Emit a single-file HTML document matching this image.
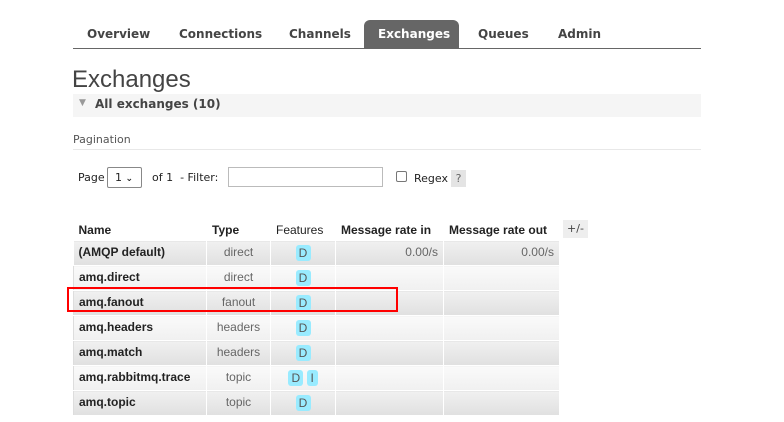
<!DOCTYPE html>
<html><head><style>
*{margin:0;padding:0;box-sizing:border-box}
body{width:784px;height:422px;background:#fff;font-family:"DejaVu Sans","Liberation Sans",sans-serif;color:#222;position:relative;overflow:hidden;font-size:11.5px}
.a{position:absolute;white-space:nowrap}
.tab{position:absolute;top:27px;font-weight:bold;font-size:12px;color:#444}
table{position:absolute;left:73px;top:219px;border-collapse:collapse;font-size:12px;table-layout:fixed;width:486px;font-family:"Liberation Sans",sans-serif}
td,th{height:25px;border:1px solid #fff;border-left:1px solid #ddd;padding:0 5px;vertical-align:top;padding-top:4px;white-space:nowrap;overflow:hidden}
th{background:#fff;text-align:left;height:21px;padding-top:3px}
tr:nth-child(even) td{background:linear-gradient(#f0f0f0,#e0e0e0)}
tr:nth-child(odd) td{background:linear-gradient(#fafafa,#f0f0f0)}
td.n{font-weight:bold}
td.t{text-align:center;color:#666}
td.f{text-align:center;padding-top:3px}
td.r{text-align:right;color:#666}
.b{display:inline-block;background:#99ebff;color:#555;border-radius:3px;width:15px;height:16px;line-height:16px;text-align:center;font-size:12px;margin-top:1px}
</style></head><body>
<div class="a" style="left:364px;top:20px;width:95px;height:29px;background:#666;border-radius:6px 6px 0 0"></div>
<div class="tab" style="left:87px">Overview</div>
<div class="tab" style="left:179px">Connections</div>
<div class="tab" style="left:289px">Channels</div>
<div class="tab" style="left:378px;color:#fff">Exchanges</div>
<div class="tab" style="left:478px">Queues</div>
<div class="tab" style="left:558px">Admin</div>
<div class="a" style="left:73px;top:48px;width:628px;height:1px;background:#666"></div>
<div class="a" style="left:72px;top:66px;font-size:24px;color:#444;font-family:'Liberation Sans',sans-serif">Exchanges</div>
<div class="a" style="left:73px;top:94px;width:628px;height:23px;background:#f5f5f5"></div>
<div class="a" style="left:79px;top:98px;font-size:9px;color:#999">▼</div>
<div class="a" style="left:95px;top:97px;font-weight:bold;font-size:12px;color:#444">All exchanges (10)</div>
<div class="a" style="left:73px;top:133px;font-size:11px;color:#555">Pagination</div>
<div class="a" style="left:73px;top:149px;width:628px;height:1px;background:#e8e8e8"></div>
<div class="a" style="left:78px;top:171px;font-size:11px">Page</div>
<div class="a" style="left:107px;top:167px;width:35px;height:21px;border:1px solid #888;border-radius:2px;font-size:11px;padding:3px 0 0 7px">1 <span style="font-size:9px;font-weight:bold">⌄</span></div>
<div class="a" style="left:152px;top:171px;font-size:11px">of 1 &nbsp;- Filter:</div>
<div class="a" style="left:228px;top:167px;width:155px;height:20px;border:1px solid #bbb"></div>
<div class="a" style="left:396px;top:171px;width:11px;height:11px;border:1px solid #777;border-radius:2px"></div>
<div class="a" style="left:414px;top:172px;font-size:11px">Regex</div>
<div class="a" style="left:451px;top:170px;width:15px;height:17px;background:#e4e4e4;color:#666;font-size:11px;text-align:center;padding-top:2px">?</div>
<table>
<colgroup><col style="width:133px"><col style="width:64px"><col style="width:65px"><col style="width:108px"><col style="width:116px"></colgroup>
<tr><th style="border-left:none">Name</th><th>Type</th><th style="font-weight:normal">Features</th><th>Message rate in</th><th>Message rate out</th></tr>
<tr><td class="n" style="border-left:none">(AMQP default)</td><td class="t">direct</td><td class="f"><span class="b">D</span></td><td class="r">0.00/s</td><td class="r">0.00/s</td></tr>
<tr><td class="n">amq.direct</td><td class="t">direct</td><td class="f"><span class="b">D</span></td><td></td><td></td></tr>
<tr><td class="n">amq.fanout</td><td class="t">fanout</td><td class="f"><span class="b">D</span></td><td></td><td></td></tr>
<tr><td class="n">amq.headers</td><td class="t">headers</td><td class="f"><span class="b">D</span></td><td></td><td></td></tr>
<tr><td class="n">amq.match</td><td class="t">headers</td><td class="f"><span class="b">D</span></td><td></td><td></td></tr>
<tr><td class="n">amq.rabbitmq.trace</td><td class="t">topic</td><td class="f"><span class="b">D</span> <span class="b" style="width:11px">I</span></td><td></td><td></td></tr>
<tr><td class="n">amq.topic</td><td class="t">topic</td><td class="f"><span class="b">D</span></td><td></td><td></td></tr>
</table>
<div class="a" style="left:563px;top:220px;width:25px;height:18px;background:#eee;font-size:11px;color:#444;text-align:center;padding-top:2px">+/-</div>
<div class="a" style="left:67px;top:287px;width:331px;height:25px;border:2px solid #f00"></div>
</body></html>
